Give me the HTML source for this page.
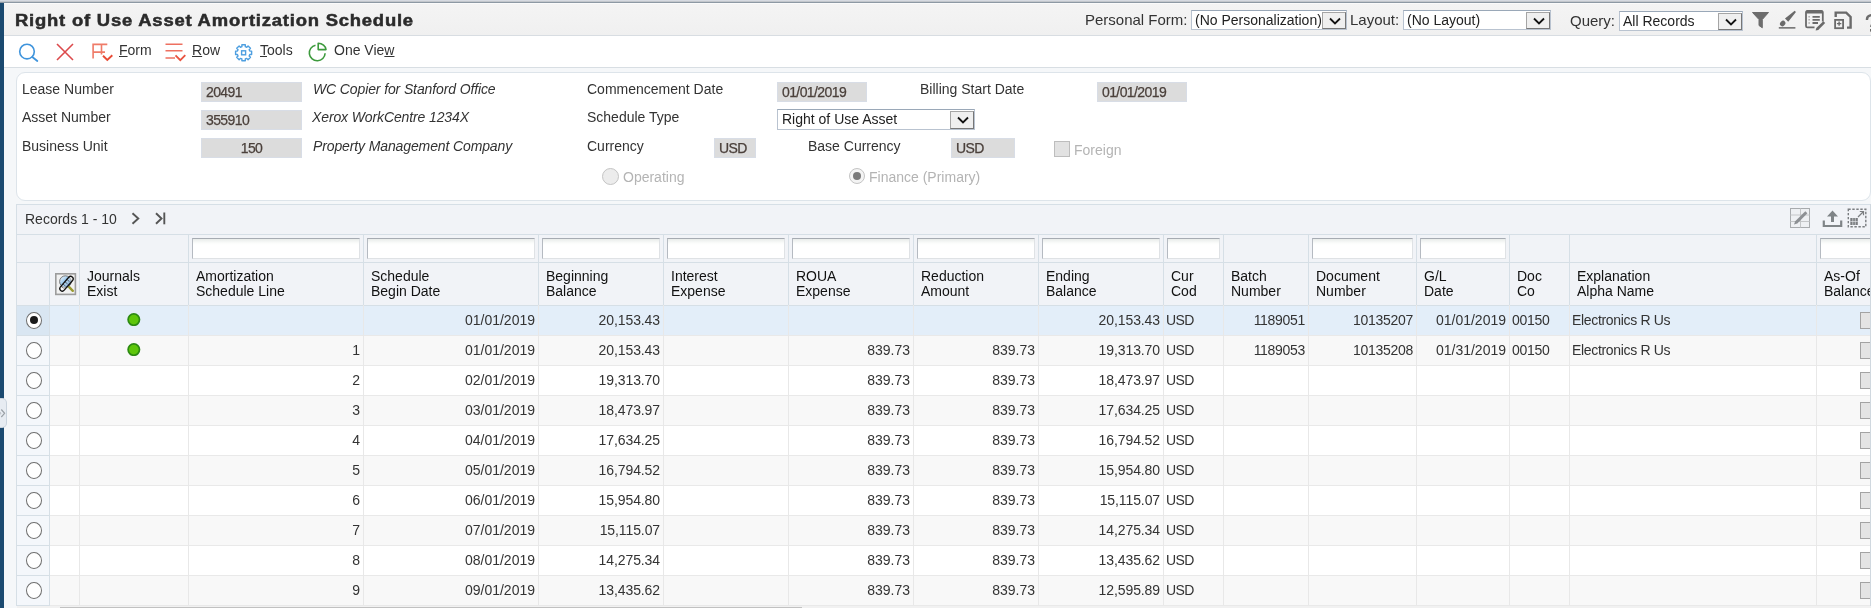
<!DOCTYPE html>
<html><head><meta charset="utf-8"><style>
*{margin:0;padding:0;box-sizing:border-box}
html,body{width:1871px;height:608px;overflow:hidden;background:#f5f7f9;font-family:"Liberation Sans",sans-serif;color:#333;-webkit-font-smoothing:antialiased}
body{will-change:transform}
.a{position:absolute;white-space:nowrap}
.t14{font-size:14px;line-height:16px}
.t15{font-size:15px;line-height:17px}
.t13{font-size:13px;line-height:15px}
.sel{position:absolute;background:#fff;border:1px solid #b9c3d0;border-top-color:#9aa8b8}
.sel .btn{position:absolute;top:1px;right:0;width:24px;bottom:0;background:#efefef;border:1px solid #a5a5a5;border-right-color:#777;border-bottom-color:#777}
.chev{position:absolute;left:6px;top:4px;width:10px;height:6px}
.ro{position:absolute;background:#dcdcdc;border:1px solid #d8dde6;color:#4b403b;font-size:14px;line-height:19px;letter-spacing:-0.6px;-webkit-text-stroke:0.25px #4b403b}
.vl{position:absolute;width:1px}
.hl{position:absolute;height:1px}
.fi{position:absolute;top:238px;height:21px;background:linear-gradient(#e9ecea,#fbfcfb 4px,#fff 6px);border:1px solid #dfe2e5;border-top-color:#a6abb2;border-left-color:#b5bac1}
.hd{position:absolute;top:269px;font-size:14px;line-height:15px;color:#111}
.cell{position:absolute;font-size:14px;line-height:30px;height:30px;color:#333}
</style></head><body>

<div class="a" style="left:0;top:0;width:1871px;height:3px;background:linear-gradient(#d6dae1 0,#d6dae1 1px,#c3c7cc 1px,#c3c7cc 2px,#8d99a4 2px)"></div>
<div class="a" style="left:0;top:3px;width:4px;height:605px;background:#1b4a70"></div>
<div class="a" style="left:4px;top:3px;width:1867px;height:33px;background:linear-gradient(#fbfbfb 0,#fbfbfb 1px,#f4f4f4 1px,#f0f0f0);border-bottom:1px solid #d8dde2"></div>
<div class="a" style="left:15px;top:11px;font-size:16px;line-height:19px;font-weight:bold;letter-spacing:0.7px;color:#2b2b2b;transform-origin:0 0;transform:scaleX(1.15);-webkit-text-stroke:0.5px #2b2b2b">Right of Use Asset Amortization Schedule</div>
<div class="a t15" style="left:1085px;top:11px;color:#333">Personal Form:</div>
<div class="sel" style="left:1191px;top:10px;width:156px;height:20px"><div class="a t14" style="left:3px;top:1px;color:#222">(No Personalization)</div><div class="btn"><svg class="a" style="left:5.5px;top:4px" width="12" height="8" viewBox="0 0 12 8"><path d="M1 1.5 L6 6.5 L11 1.5" fill="none" stroke="#111" stroke-width="1.8"/></svg></div></div>
<div class="a t15" style="left:1350px;top:11px;color:#333">Layout:</div>
<div class="sel" style="left:1403px;top:10px;width:148px;height:20px"><div class="a t14" style="left:3px;top:1px;color:#222">(No Layout)</div><div class="btn"><svg class="a" style="left:5.5px;top:4px" width="12" height="8" viewBox="0 0 12 8"><path d="M1 1.5 L6 6.5 L11 1.5" fill="none" stroke="#111" stroke-width="1.8"/></svg></div></div>
<div class="a t15" style="left:1570px;top:12px;color:#333">Query:</div>
<div class="sel" style="left:1619px;top:11px;width:124px;height:20px"><div class="a t14" style="left:3px;top:1px;color:#222">All Records</div><div class="btn"><svg class="a" style="left:5.5px;top:4px" width="12" height="8" viewBox="0 0 12 8"><path d="M1 1.5 L6 6.5 L11 1.5" fill="none" stroke="#111" stroke-width="1.8"/></svg></div></div>
<div class="a" style="left:4px;top:36px;width:1867px;height:32px;background:#fff;border-bottom:1px solid #d8dee3"></div>
<div class="a t14" style="left:119px;top:42px;color:#333"><u>F</u>orm</div>
<div class="a t14" style="left:192px;top:42px;color:#333"><u>R</u>ow</div>
<div class="a t14" style="left:260px;top:42px;color:#333"><u>T</u>ools</div>
<div class="a t14" style="left:334px;top:42px;color:#333">One Vie<u>w</u></div>
<div class="a" style="left:16px;top:72px;width:1855px;height:129px;background:#fff;border:1px solid #dde4ea;border-radius:9px"></div>
<div class="a t14" style="left:22px;top:81px;color:#333">Lease Number</div>
<div class="a t14" style="left:22px;top:109px;color:#333">Asset Number</div>
<div class="a t14" style="left:22px;top:138px;color:#333">Business Unit</div>
<div class="a t14" style="left:587px;top:81px;color:#333">Commencement Date</div>
<div class="a t14" style="left:587px;top:109px;color:#333">Schedule Type</div>
<div class="a t14" style="left:587px;top:138px;color:#333">Currency</div>
<div class="a t14" style="left:920px;top:81px;color:#333">Billing Start Date</div>
<div class="a t14" style="left:808px;top:138px;color:#333">Base Currency</div>
<div class="a t14" style="left:313px;top:81px;font-style:italic;color:#333;letter-spacing:-0.12px">WC Copier for Stanford Office</div>
<div class="a t14" style="left:312px;top:109px;font-style:italic;color:#333;letter-spacing:-0.12px">Xerox WorkCentre 1234X</div>
<div class="a t14" style="left:313px;top:138px;font-style:italic;color:#333;letter-spacing:-0.12px">Property Management Company</div>
<div class="ro" style="left:201px;top:82px;width:101px;height:20px;padding:0 4px;text-align:left">20491</div>
<div class="ro" style="left:201px;top:110px;width:101px;height:20px;padding:0 4px;text-align:left">355910</div>
<div class="ro" style="left:201px;top:138px;width:101px;height:20px;padding:0 4px;text-align:center">150</div>
<div class="ro" style="left:777px;top:82px;width:90px;height:20px;padding:0 4px;text-align:left">01/01/2019</div>
<div class="ro" style="left:1097px;top:82px;width:90px;height:20px;padding:0 4px;text-align:left">01/01/2019</div>
<div class="ro" style="left:714px;top:138px;width:42px;height:20px;padding:0 4px;text-align:left">USD</div>
<div class="ro" style="left:951px;top:138px;width:64px;height:20px;padding:0 4px;text-align:left">USD</div>
<div class="sel" style="left:777px;top:109px;width:198px;height:21px"><div class="a t14" style="left:4px;top:1px;color:#222">Right of Use Asset</div><div class="btn" style="top:1px;bottom:0;right:0"><svg class="a" style="left:5.5px;top:4px" width="12" height="8" viewBox="0 0 12 8"><path d="M1 1.5 L6 6.5 L11 1.5" fill="none" stroke="#111" stroke-width="1.8"/></svg></div></div>
<div class="a" style="left:1054px;top:141px;width:16px;height:16px;background:#e2e2e2;border:1px solid #bdbdbd"></div>
<div class="a t14" style="left:1074px;top:142px;color:#b4b4b4">Foreign</div>
<div class="a" style="left:602px;top:168px;width:17px;height:17px;border-radius:50%;background:#ececec;border:1px solid #c4c4c4"></div>
<div class="a t14" style="left:623px;top:169px;color:#b4b4b4">Operating</div>
<div class="a" style="left:849px;top:168px;width:16px;height:16px;border-radius:50%;background:#f4f4f4;border:1px solid #c4c4c4"></div>
<div class="a" style="left:853px;top:172px;width:8px;height:8px;border-radius:50%;background:#7a7a7a"></div>
<div class="a t14" style="left:869px;top:169px;color:#b4b4b4">Finance (Primary)</div>
<div class="a" style="left:16px;top:204px;width:1855px;height:101px;background:#f1f3f7"></div>
<div class="a t14" style="left:25px;top:211px;color:#333">Records 1 - 10</div>
<div class="hl" style="left:16px;top:204px;width:1855px;background:#d6dfe6"></div>
<div class="hl" style="left:16px;top:234px;width:1855px;background:#d6dfe6"></div>
<div class="hl" style="left:16px;top:262px;width:1855px;background:#d6dfe6"></div>
<div class="vl" style="left:16px;top:204px;height:402px;background:#d6dfe6"></div>
<div class="a" style="left:49px;top:305px;width:1822px;height:30px;background:#e3eef9"></div>
<div class="a" style="left:17px;top:305px;width:32px;height:30px;background:#d9e6f2"></div>
<div class="hl" style="left:17px;top:305px;width:1854px;background:#d6dfe6"></div>
<div class="hl" style="left:17px;top:305px;width:32px;background:#d6dfe6"></div>
<div class="a" style="left:26px;top:312px;width:16px;height:17px;border-radius:50%;background:#fff;border:1.7px solid #6e6e6e"></div>
<div class="a" style="left:30px;top:316px;width:8px;height:8px;border-radius:50%;background:#1a1a1a"></div>
<svg class="a" style="left:127px;top:312px" width="14" height="14" viewBox="0 0 14 14"><circle cx="6.8" cy="7.6" r="5.7" fill="#5ec60a" stroke="#2c8a12" stroke-width="1.7"/></svg>
<div class="cell" style="left:188px;top:305px;width:172px;text-align:right"></div>
<div class="cell" style="left:363px;top:305px;width:172px;text-align:right">01/01/2019</div>
<div class="cell" style="left:538px;top:305px;width:122px;text-align:right;letter-spacing:-0.1px">20,153.43</div>
<div class="cell" style="left:1038px;top:305px;width:122px;text-align:right;letter-spacing:-0.1px">20,153.43</div>
<div class="cell" style="left:1166px;top:305px;letter-spacing:-0.6px">USD</div>
<div class="cell" style="left:1223px;top:305px;width:82px;text-align:right;letter-spacing:-0.3px">1189051</div>
<div class="cell" style="left:1308px;top:305px;width:105px;text-align:right;letter-spacing:-0.3px">10135207</div>
<div class="cell" style="left:1416px;top:305px;width:90px;text-align:right">01/01/2019</div>
<div class="cell" style="left:1512px;top:305px;letter-spacing:-0.3px">00150</div>
<div class="cell" style="left:1572px;top:305px;letter-spacing:-0.33px">Electronics R Us</div>
<div class="a" style="left:1860px;top:312px;width:16px;height:17px;background:#e4e4e4;border:1px solid #a3a3a3"></div>
<div class="a" style="left:49px;top:335px;width:1822px;height:30px;background:#f8f8f8"></div>
<div class="a" style="left:17px;top:335px;width:32px;height:30px;background:#f4f7fb"></div>
<div class="hl" style="left:17px;top:335px;width:1854px;background:#e9e9e9"></div>
<div class="hl" style="left:17px;top:335px;width:32px;background:#d6dfe6"></div>
<div class="a" style="left:26px;top:342px;width:16px;height:17px;border-radius:50%;background:#fff;border:1.7px solid #6e6e6e"></div>
<svg class="a" style="left:127px;top:342px" width="14" height="14" viewBox="0 0 14 14"><circle cx="6.8" cy="7.6" r="5.7" fill="#5ec60a" stroke="#2c8a12" stroke-width="1.7"/></svg>
<div class="cell" style="left:188px;top:335px;width:172px;text-align:right">1</div>
<div class="cell" style="left:363px;top:335px;width:172px;text-align:right">01/01/2019</div>
<div class="cell" style="left:538px;top:335px;width:122px;text-align:right;letter-spacing:-0.1px">20,153.43</div>
<div class="cell" style="left:788px;top:335px;width:122px;text-align:right">839.73</div>
<div class="cell" style="left:913px;top:335px;width:122px;text-align:right">839.73</div>
<div class="cell" style="left:1038px;top:335px;width:122px;text-align:right;letter-spacing:-0.1px">19,313.70</div>
<div class="cell" style="left:1166px;top:335px;letter-spacing:-0.6px">USD</div>
<div class="cell" style="left:1223px;top:335px;width:82px;text-align:right;letter-spacing:-0.3px">1189053</div>
<div class="cell" style="left:1308px;top:335px;width:105px;text-align:right;letter-spacing:-0.3px">10135208</div>
<div class="cell" style="left:1416px;top:335px;width:90px;text-align:right">01/31/2019</div>
<div class="cell" style="left:1512px;top:335px;letter-spacing:-0.3px">00150</div>
<div class="cell" style="left:1572px;top:335px;letter-spacing:-0.33px">Electronics R Us</div>
<div class="a" style="left:1860px;top:342px;width:16px;height:17px;background:#e4e4e4;border:1px solid #a3a3a3"></div>
<div class="a" style="left:49px;top:365px;width:1822px;height:30px;background:#ffffff"></div>
<div class="a" style="left:17px;top:365px;width:32px;height:30px;background:#f4f7fb"></div>
<div class="hl" style="left:17px;top:365px;width:1854px;background:#e9e9e9"></div>
<div class="hl" style="left:17px;top:365px;width:32px;background:#d6dfe6"></div>
<div class="a" style="left:26px;top:372px;width:16px;height:17px;border-radius:50%;background:#fff;border:1.7px solid #6e6e6e"></div>
<div class="cell" style="left:188px;top:365px;width:172px;text-align:right">2</div>
<div class="cell" style="left:363px;top:365px;width:172px;text-align:right">02/01/2019</div>
<div class="cell" style="left:538px;top:365px;width:122px;text-align:right;letter-spacing:-0.1px">19,313.70</div>
<div class="cell" style="left:788px;top:365px;width:122px;text-align:right">839.73</div>
<div class="cell" style="left:913px;top:365px;width:122px;text-align:right">839.73</div>
<div class="cell" style="left:1038px;top:365px;width:122px;text-align:right;letter-spacing:-0.1px">18,473.97</div>
<div class="cell" style="left:1166px;top:365px;letter-spacing:-0.6px">USD</div>
<div class="a" style="left:1860px;top:372px;width:16px;height:17px;background:#e4e4e4;border:1px solid #a3a3a3"></div>
<div class="a" style="left:49px;top:395px;width:1822px;height:30px;background:#f8f8f8"></div>
<div class="a" style="left:17px;top:395px;width:32px;height:30px;background:#f4f7fb"></div>
<div class="hl" style="left:17px;top:395px;width:1854px;background:#e9e9e9"></div>
<div class="hl" style="left:17px;top:395px;width:32px;background:#d6dfe6"></div>
<div class="a" style="left:26px;top:402px;width:16px;height:17px;border-radius:50%;background:#fff;border:1.7px solid #6e6e6e"></div>
<div class="cell" style="left:188px;top:395px;width:172px;text-align:right">3</div>
<div class="cell" style="left:363px;top:395px;width:172px;text-align:right">03/01/2019</div>
<div class="cell" style="left:538px;top:395px;width:122px;text-align:right;letter-spacing:-0.1px">18,473.97</div>
<div class="cell" style="left:788px;top:395px;width:122px;text-align:right">839.73</div>
<div class="cell" style="left:913px;top:395px;width:122px;text-align:right">839.73</div>
<div class="cell" style="left:1038px;top:395px;width:122px;text-align:right;letter-spacing:-0.1px">17,634.25</div>
<div class="cell" style="left:1166px;top:395px;letter-spacing:-0.6px">USD</div>
<div class="a" style="left:1860px;top:402px;width:16px;height:17px;background:#e4e4e4;border:1px solid #a3a3a3"></div>
<div class="a" style="left:49px;top:425px;width:1822px;height:30px;background:#ffffff"></div>
<div class="a" style="left:17px;top:425px;width:32px;height:30px;background:#f4f7fb"></div>
<div class="hl" style="left:17px;top:425px;width:1854px;background:#e9e9e9"></div>
<div class="hl" style="left:17px;top:425px;width:32px;background:#d6dfe6"></div>
<div class="a" style="left:26px;top:432px;width:16px;height:17px;border-radius:50%;background:#fff;border:1.7px solid #6e6e6e"></div>
<div class="cell" style="left:188px;top:425px;width:172px;text-align:right">4</div>
<div class="cell" style="left:363px;top:425px;width:172px;text-align:right">04/01/2019</div>
<div class="cell" style="left:538px;top:425px;width:122px;text-align:right;letter-spacing:-0.1px">17,634.25</div>
<div class="cell" style="left:788px;top:425px;width:122px;text-align:right">839.73</div>
<div class="cell" style="left:913px;top:425px;width:122px;text-align:right">839.73</div>
<div class="cell" style="left:1038px;top:425px;width:122px;text-align:right;letter-spacing:-0.1px">16,794.52</div>
<div class="cell" style="left:1166px;top:425px;letter-spacing:-0.6px">USD</div>
<div class="a" style="left:1860px;top:432px;width:16px;height:17px;background:#e4e4e4;border:1px solid #a3a3a3"></div>
<div class="a" style="left:49px;top:455px;width:1822px;height:30px;background:#f8f8f8"></div>
<div class="a" style="left:17px;top:455px;width:32px;height:30px;background:#f4f7fb"></div>
<div class="hl" style="left:17px;top:455px;width:1854px;background:#e9e9e9"></div>
<div class="hl" style="left:17px;top:455px;width:32px;background:#d6dfe6"></div>
<div class="a" style="left:26px;top:462px;width:16px;height:17px;border-radius:50%;background:#fff;border:1.7px solid #6e6e6e"></div>
<div class="cell" style="left:188px;top:455px;width:172px;text-align:right">5</div>
<div class="cell" style="left:363px;top:455px;width:172px;text-align:right">05/01/2019</div>
<div class="cell" style="left:538px;top:455px;width:122px;text-align:right;letter-spacing:-0.1px">16,794.52</div>
<div class="cell" style="left:788px;top:455px;width:122px;text-align:right">839.73</div>
<div class="cell" style="left:913px;top:455px;width:122px;text-align:right">839.73</div>
<div class="cell" style="left:1038px;top:455px;width:122px;text-align:right;letter-spacing:-0.1px">15,954.80</div>
<div class="cell" style="left:1166px;top:455px;letter-spacing:-0.6px">USD</div>
<div class="a" style="left:1860px;top:462px;width:16px;height:17px;background:#e4e4e4;border:1px solid #a3a3a3"></div>
<div class="a" style="left:49px;top:485px;width:1822px;height:30px;background:#ffffff"></div>
<div class="a" style="left:17px;top:485px;width:32px;height:30px;background:#f4f7fb"></div>
<div class="hl" style="left:17px;top:485px;width:1854px;background:#e9e9e9"></div>
<div class="hl" style="left:17px;top:485px;width:32px;background:#d6dfe6"></div>
<div class="a" style="left:26px;top:492px;width:16px;height:17px;border-radius:50%;background:#fff;border:1.7px solid #6e6e6e"></div>
<div class="cell" style="left:188px;top:485px;width:172px;text-align:right">6</div>
<div class="cell" style="left:363px;top:485px;width:172px;text-align:right">06/01/2019</div>
<div class="cell" style="left:538px;top:485px;width:122px;text-align:right;letter-spacing:-0.1px">15,954.80</div>
<div class="cell" style="left:788px;top:485px;width:122px;text-align:right">839.73</div>
<div class="cell" style="left:913px;top:485px;width:122px;text-align:right">839.73</div>
<div class="cell" style="left:1038px;top:485px;width:122px;text-align:right;letter-spacing:-0.1px">15,115.07</div>
<div class="cell" style="left:1166px;top:485px;letter-spacing:-0.6px">USD</div>
<div class="a" style="left:1860px;top:492px;width:16px;height:17px;background:#e4e4e4;border:1px solid #a3a3a3"></div>
<div class="a" style="left:49px;top:515px;width:1822px;height:30px;background:#f8f8f8"></div>
<div class="a" style="left:17px;top:515px;width:32px;height:30px;background:#f4f7fb"></div>
<div class="hl" style="left:17px;top:515px;width:1854px;background:#e9e9e9"></div>
<div class="hl" style="left:17px;top:515px;width:32px;background:#d6dfe6"></div>
<div class="a" style="left:26px;top:522px;width:16px;height:17px;border-radius:50%;background:#fff;border:1.7px solid #6e6e6e"></div>
<div class="cell" style="left:188px;top:515px;width:172px;text-align:right">7</div>
<div class="cell" style="left:363px;top:515px;width:172px;text-align:right">07/01/2019</div>
<div class="cell" style="left:538px;top:515px;width:122px;text-align:right;letter-spacing:-0.1px">15,115.07</div>
<div class="cell" style="left:788px;top:515px;width:122px;text-align:right">839.73</div>
<div class="cell" style="left:913px;top:515px;width:122px;text-align:right">839.73</div>
<div class="cell" style="left:1038px;top:515px;width:122px;text-align:right;letter-spacing:-0.1px">14,275.34</div>
<div class="cell" style="left:1166px;top:515px;letter-spacing:-0.6px">USD</div>
<div class="a" style="left:1860px;top:522px;width:16px;height:17px;background:#e4e4e4;border:1px solid #a3a3a3"></div>
<div class="a" style="left:49px;top:545px;width:1822px;height:30px;background:#ffffff"></div>
<div class="a" style="left:17px;top:545px;width:32px;height:30px;background:#f4f7fb"></div>
<div class="hl" style="left:17px;top:545px;width:1854px;background:#e9e9e9"></div>
<div class="hl" style="left:17px;top:545px;width:32px;background:#d6dfe6"></div>
<div class="a" style="left:26px;top:552px;width:16px;height:17px;border-radius:50%;background:#fff;border:1.7px solid #6e6e6e"></div>
<div class="cell" style="left:188px;top:545px;width:172px;text-align:right">8</div>
<div class="cell" style="left:363px;top:545px;width:172px;text-align:right">08/01/2019</div>
<div class="cell" style="left:538px;top:545px;width:122px;text-align:right;letter-spacing:-0.1px">14,275.34</div>
<div class="cell" style="left:788px;top:545px;width:122px;text-align:right">839.73</div>
<div class="cell" style="left:913px;top:545px;width:122px;text-align:right">839.73</div>
<div class="cell" style="left:1038px;top:545px;width:122px;text-align:right;letter-spacing:-0.1px">13,435.62</div>
<div class="cell" style="left:1166px;top:545px;letter-spacing:-0.6px">USD</div>
<div class="a" style="left:1860px;top:552px;width:16px;height:17px;background:#e4e4e4;border:1px solid #a3a3a3"></div>
<div class="a" style="left:49px;top:575px;width:1822px;height:30px;background:#f8f8f8"></div>
<div class="a" style="left:17px;top:575px;width:32px;height:30px;background:#f4f7fb"></div>
<div class="hl" style="left:17px;top:575px;width:1854px;background:#e9e9e9"></div>
<div class="hl" style="left:17px;top:575px;width:32px;background:#d6dfe6"></div>
<div class="a" style="left:26px;top:582px;width:16px;height:17px;border-radius:50%;background:#fff;border:1.7px solid #6e6e6e"></div>
<div class="cell" style="left:188px;top:575px;width:172px;text-align:right">9</div>
<div class="cell" style="left:363px;top:575px;width:172px;text-align:right">09/01/2019</div>
<div class="cell" style="left:538px;top:575px;width:122px;text-align:right;letter-spacing:-0.1px">13,435.62</div>
<div class="cell" style="left:788px;top:575px;width:122px;text-align:right">839.73</div>
<div class="cell" style="left:913px;top:575px;width:122px;text-align:right">839.73</div>
<div class="cell" style="left:1038px;top:575px;width:122px;text-align:right;letter-spacing:-0.1px">12,595.89</div>
<div class="cell" style="left:1166px;top:575px;letter-spacing:-0.6px">USD</div>
<div class="a" style="left:1860px;top:582px;width:16px;height:17px;background:#e4e4e4;border:1px solid #a3a3a3"></div>
<div class="hl" style="left:17px;top:605px;width:1854px;background:#e9e9e9"></div>
<div class="hl" style="left:17px;top:605px;width:32px;background:#d6dfe6"></div>
<div class="vl" style="left:49px;top:262px;height:43px;background:#d6dfe6"></div>
<div class="vl" style="left:49px;top:305px;height:301px;background:#d6dfe6"></div>
<div class="vl" style="left:79px;top:234px;height:71px;background:#d6dfe6"></div>
<div class="vl" style="left:79px;top:305px;height:300px;background:#e8e8e8"></div>
<div class="vl" style="left:188px;top:234px;height:71px;background:#d6dfe6"></div>
<div class="vl" style="left:188px;top:305px;height:300px;background:#e8e8e8"></div>
<div class="vl" style="left:363px;top:234px;height:71px;background:#d6dfe6"></div>
<div class="vl" style="left:363px;top:305px;height:300px;background:#e8e8e8"></div>
<div class="vl" style="left:538px;top:234px;height:71px;background:#d6dfe6"></div>
<div class="vl" style="left:538px;top:305px;height:300px;background:#e8e8e8"></div>
<div class="vl" style="left:663px;top:234px;height:71px;background:#d6dfe6"></div>
<div class="vl" style="left:663px;top:305px;height:300px;background:#e8e8e8"></div>
<div class="vl" style="left:788px;top:234px;height:71px;background:#d6dfe6"></div>
<div class="vl" style="left:788px;top:305px;height:300px;background:#e8e8e8"></div>
<div class="vl" style="left:913px;top:234px;height:71px;background:#d6dfe6"></div>
<div class="vl" style="left:913px;top:305px;height:300px;background:#e8e8e8"></div>
<div class="vl" style="left:1038px;top:234px;height:71px;background:#d6dfe6"></div>
<div class="vl" style="left:1038px;top:305px;height:300px;background:#e8e8e8"></div>
<div class="vl" style="left:1163px;top:234px;height:71px;background:#d6dfe6"></div>
<div class="vl" style="left:1163px;top:305px;height:300px;background:#e8e8e8"></div>
<div class="vl" style="left:1223px;top:234px;height:71px;background:#d6dfe6"></div>
<div class="vl" style="left:1223px;top:305px;height:300px;background:#e8e8e8"></div>
<div class="vl" style="left:1308px;top:234px;height:71px;background:#d6dfe6"></div>
<div class="vl" style="left:1308px;top:305px;height:300px;background:#e8e8e8"></div>
<div class="vl" style="left:1416px;top:234px;height:71px;background:#d6dfe6"></div>
<div class="vl" style="left:1416px;top:305px;height:300px;background:#e8e8e8"></div>
<div class="vl" style="left:1509px;top:234px;height:71px;background:#d6dfe6"></div>
<div class="vl" style="left:1509px;top:305px;height:300px;background:#e8e8e8"></div>
<div class="vl" style="left:1569px;top:234px;height:71px;background:#d6dfe6"></div>
<div class="vl" style="left:1569px;top:305px;height:300px;background:#e8e8e8"></div>
<div class="vl" style="left:1816px;top:234px;height:71px;background:#d6dfe6"></div>
<div class="vl" style="left:1816px;top:305px;height:300px;background:#e8e8e8"></div>
<div class="hd" style="left:87px">Journals<br>Exist</div>
<div class="hd" style="left:196px">Amortization<br>Schedule Line</div>
<div class="hd" style="left:371px">Schedule<br>Begin Date</div>
<div class="hd" style="left:546px">Beginning<br>Balance</div>
<div class="hd" style="left:671px">Interest<br>Expense</div>
<div class="hd" style="left:796px">ROUA<br>Expense</div>
<div class="hd" style="left:921px">Reduction<br>Amount</div>
<div class="hd" style="left:1046px">Ending<br>Balance</div>
<div class="hd" style="left:1171px">Cur<br>Cod</div>
<div class="hd" style="left:1231px">Batch<br>Number</div>
<div class="hd" style="left:1316px">Document<br>Number</div>
<div class="hd" style="left:1424px">G/L<br>Date</div>
<div class="hd" style="left:1517px">Doc<br>Co</div>
<div class="hd" style="left:1577px">Explanation<br>Alpha Name</div>
<div class="hd" style="left:1824px">As-Of<br>Balance</div>
<div class="fi" style="left:192px;width:168px"></div>
<div class="fi" style="left:367px;width:168px"></div>
<div class="fi" style="left:542px;width:118px"></div>
<div class="fi" style="left:667px;width:118px"></div>
<div class="fi" style="left:792px;width:118px"></div>
<div class="fi" style="left:917px;width:118px"></div>
<div class="fi" style="left:1042px;width:118px"></div>
<div class="fi" style="left:1167px;width:53px"></div>
<div class="fi" style="left:1312px;width:101px"></div>
<div class="fi" style="left:1420px;width:86px"></div>
<div class="fi" style="left:1820px;width:60px"></div>
<div class="a" style="left:17px;top:606px;width:1854px;height:2px;background:#f1f1f1"></div>
<div class="a" style="left:60px;top:607px;width:742px;height:1px;background:#c1c1c1"></div>
<div class="a" style="left:1870px;top:204px;width:1px;height:402px;background:#d0d8df"></div>
<div class="a" style="left:0;top:398px;width:7px;height:30px;background:#e7ecf2;border:1px solid #c9d3dd;border-left:none;border-radius:0 5px 5px 0"></div>
<svg class="a" style="left:0;top:405px" width="7" height="16" viewBox="0 0 7 16"><path d="M1.3 4.5 L4.6 8.3 L1.3 12" fill="none" stroke="#9aa0a6" stroke-width="1.2"/><path d="M-1.5 5.5 L0.8 8.3 L-1.5 11" fill="none" stroke="#b0b5ba" stroke-width="1"/></svg>
<svg class="a" style="left:17px;top:42px" width="24" height="22" viewBox="0 0 24 22"><circle cx="10" cy="9.6" r="7.3" fill="none" stroke="#3f94dc" stroke-width="1.6"/><path d="M15.3 15 L20.3 19" stroke="#3f94dc" stroke-width="1.8" stroke-linecap="round"/></svg>
<svg class="a" style="left:54px;top:42px" width="22" height="20" viewBox="0 0 22 20"><path d="M3 2 L19 18 M19 2 L3 18" stroke="#dc4a4c" stroke-width="1.6"/></svg>
<svg class="a" style="left:90px;top:42px" width="26" height="22" viewBox="0 0 26 22"><path d="M2.3 2.35 H17.3 M3.1 1.6 V16.4 M11.5 2.3 V12.6 M2.3 10.1 H15" fill="none" stroke="#ef7b68" stroke-width="1.6"/><path d="M13 13.8 L17.3 17.9 L22.3 13.2" fill="none" stroke="#e84a35" stroke-width="1.9"/></svg>
<svg class="a" style="left:163px;top:42px" width="26" height="22" viewBox="0 0 26 22"><path d="M2.5 2.2 H19.5 M2.5 8.8 H19.5 M2.5 16 H12" fill="none" stroke="#ee7060" stroke-width="1.5"/><path d="M12.5 13.3 L17.3 18.2 L22.3 13.2" fill="none" stroke="#e9533f" stroke-width="1.8"/></svg>
<svg class="a" style="left:234px;top:42px" width="20" height="21" viewBox="0 0 20 20"><path d="M15.77 8.59 L17.62 8.59 L17.62 12.01 L15.77 12.01 L15.17 13.45 L16.48 14.76 L14.06 17.18 L12.75 15.87 L11.31 16.47 L11.31 18.32 L7.89 18.32 L7.89 16.47 L6.45 15.87 L5.14 17.18 L2.72 14.76 L4.03 13.45 L3.43 12.01 L1.58 12.01 L1.58 8.59 L3.43 8.59 L4.03 7.15 L2.72 5.84 L5.14 3.42 L6.45 4.73 L7.89 4.13 L7.89 2.28 L11.31 2.28 L11.31 4.13 L12.75 4.73 L14.06 3.42 L16.48 5.84 L15.17 7.15Z" fill="none" stroke="#4e9fe0" stroke-width="1.4" stroke-linejoin="round"/><rect x="7.6" y="8.3" width="4" height="4" fill="none" stroke="#4e9fe0" stroke-width="1.4"/></svg>
<svg class="a" style="left:306px;top:40px" width="24" height="24" viewBox="0 0 24 24"><path d="M9.5 5.2 A7.9 7.9 0 1 0 19.1 13.2" fill="none" stroke="#3d9a3d" stroke-width="1.6"/><path d="M12.2 3.2 V9.6 H20 A8 7 0 0 0 12.2 3.2 Z" fill="none" stroke="#3d9a3d" stroke-width="1.6" stroke-linejoin="round"/></svg>
<svg class="a" style="left:1751px;top:11px" width="20" height="19" viewBox="0 0 20 19"><path d="M1.5 1.5 H17.5 L11.3 8.5 V16.8 L8 14.5 V8.5 Z" fill="#6d6d6d" stroke="#6d6d6d" stroke-width="1" stroke-linejoin="round"/></svg>
<svg class="a" style="left:1777px;top:10px" width="20" height="20" viewBox="0 0 20 20"><path d="M17.67 0.66 L18.93 1.94 L11.22 11.84 L7.98 8.56 Z" fill="#6a6a6a"/><ellipse cx="5.7" cy="13.5" rx="3" ry="2.4" transform="rotate(-45 5.7 13.5)" fill="#6a6a6a"/><rect x="1.8" y="17" width="16.6" height="1.7" fill="#7a7a7a"/></svg>
<svg class="a" style="left:1804px;top:9px" width="22" height="22" viewBox="0 0 22 22"><path d="M18.8 12.5 V3.5 Q18.8 2 17.3 2 H3.5 Q2 2 2 3.5 V17 Q2 18.4 3.5 18.4 H10.5" fill="none" stroke="#6a6a6a" stroke-width="1.8"/><rect x="2" y="1.5" width="16.8" height="3" rx="1" fill="#6a6a6a"/><path d="M4.6 7.8 h1 M4.6 10.8 h1 M4.6 14 h1" stroke="#8a8a8a" stroke-width="1.6"/><path d="M8.5 7.8 H15.8 M8.5 10.8 H15.8 M8.5 14 H14" stroke="#6a6a6a" stroke-width="1.8"/><path d="M19.3 12.2 L21.2 14.1 L14.3 21 L11.6 21.6 L12.3 19 Z" fill="#6a6a6a"/></svg>
<svg class="a" style="left:1833px;top:10px" width="20" height="21" viewBox="0 0 20 21"><path d="M2.7 7 V2.6 H13.2 L17.6 7 V17.6 H14" fill="none" stroke="#6a6a6a" stroke-width="2.4" stroke-linejoin="miter"/><rect x="2.1" y="9.9" width="8" height="8.3" fill="none" stroke="#6a6a6a" stroke-width="1.8"/><path d="M6.1 11.5 V15.8 M3.9 13.65 H8.3" stroke="#6a6a6a" stroke-width="1.4"/></svg>
<svg class="a" style="left:1864px;top:14px" width="9" height="19" viewBox="0 0 9 19"><path d="M3 6 A4.3 4.3 0 1 1 9.5 9.3 Q7.3 10.5 7.3 13" fill="none" stroke="#6d6d6d" stroke-width="2.4"/><rect x="6" y="15" width="2.6" height="2.6" fill="#6d6d6d"/></svg>
<svg class="a" style="left:129px;top:210px" width="14" height="17" viewBox="0 0 14 17"><path d="M3.5 3.2 L9.3 8.5 L3.5 13.8" fill="none" stroke="#555" stroke-width="1.9"/></svg>
<svg class="a" style="left:152px;top:210px" width="16" height="17" viewBox="0 0 16 17"><path d="M4 3.2 L9.5 8.5 L4 13.8" fill="none" stroke="#555" stroke-width="1.9"/><path d="M12.3 2.5 V14.3" stroke="#555" stroke-width="1.9"/></svg>
<svg class="a" style="left:1789px;top:207px" width="22" height="22" viewBox="0 0 22 22"><rect x="1.5" y="1.5" width="19" height="19" fill="#eef0f3" stroke="#a8abae" stroke-width="1"/><path d="M1.5 8 H20.5 M1.5 14.5 H20.5 M11.5 1.5 V20.5" stroke="#c4c6c8" stroke-width="1"/><path d="M16.3 4.2 L18.4 6.3 L8.3 16.4 L5 17.5 L6.2 14.3 Z" fill="#8d9094"/></svg>
<svg class="a" style="left:1822px;top:209px" width="22" height="20" viewBox="0 0 22 20"><path d="M10.5 1.5 L16 7.5 H12 V13 H9 V7.5 H5 Z" fill="#7f8487"/><path d="M1.8 11.5 V17 H19.2 V11.5" fill="none" stroke="#7f8487" stroke-width="2.2"/></svg>
<svg class="a" style="left:1846px;top:207px" width="22" height="21" viewBox="0 0 22 21"><rect x="2.3" y="2.3" width="17.5" height="17.5" fill="none" stroke="#7a7d80" stroke-width="1.4" stroke-dasharray="2.4 1.6"/><rect x="4.3" y="11" width="7.5" height="7" fill="#7a7d80"/><path d="M6.8 11 V18 M9.3 11 V18 M4.3 14.5 H11.8" stroke="#eef0f3" stroke-width="0.6"/><path d="M12 10 L17.5 4.5 M13.8 4.5 H17.5 V8.2" fill="none" stroke="#7a7d80" stroke-width="1.2"/></svg>
<svg class="a" style="left:55px;top:273px" width="22" height="23" viewBox="0 0 22 23"><defs><linearGradient id="lg" x1="0" y1="0" x2="1" y2="1"><stop offset="0" stop-color="#ffffff"/><stop offset="0.5" stop-color="#8cc0ea"/><stop offset="1" stop-color="#2d6fb8"/></linearGradient></defs><rect x="0.8" y="0.8" width="19.6" height="20.6" fill="#f1f1f1" stroke="#9c9c9c" stroke-width="1.6"/><circle cx="10.4" cy="8.6" r="5.8" fill="url(#lg)" stroke="#6a6a6a" stroke-width="0.9"/><path d="M14.2 14.2 L17.8 17.8" stroke="#9a9a32" stroke-width="2.4" stroke-linecap="round"/><g transform="translate(11.5 10.7) rotate(-49.4)"><rect x="-8.9" y="-2.5" width="17.8" height="5" rx="2.5" fill="#ffffff" fill-opacity="0.35" stroke="#111" stroke-width="1.3"/><path d="M-5.5 -2.5 V2.5 M-2.5 -2.5 V2.5 M0.5 -2.5 V2.5 M3.5 -2.5 V2.5" stroke="#222" stroke-width="0.9" stroke-dasharray="1 0.9"/></g></svg>
</body></html>
